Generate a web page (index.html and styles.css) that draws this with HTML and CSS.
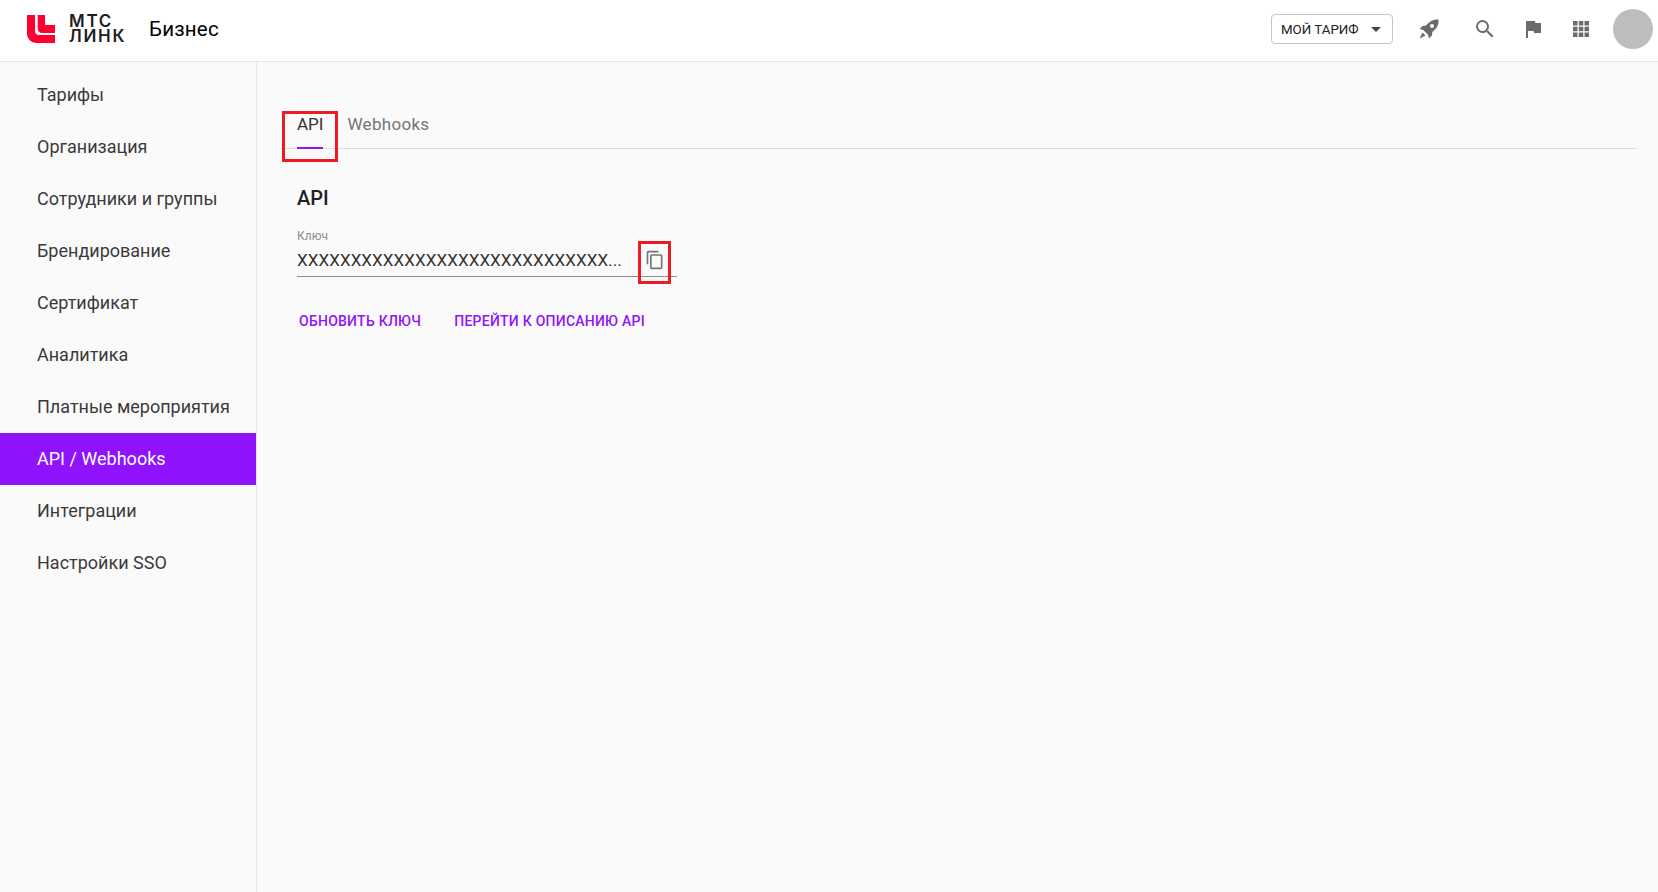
FILE: index.html
```html
<!DOCTYPE html>
<html lang="ru">
<head>
<meta charset="utf-8">
<title>API / Webhooks</title>
<link rel="stylesheet" href="styles.css">
</head>
<body>
<header class="topbar">
  <div class="brand">
    <svg class="logo" viewBox="0 0 28 28" width="28" height="28"><path fill="#ff0032" d="M0 0h8v16a4 4 0 0 0 4 4h16v8H9a9 9 0 0 1-9-9zM10.700 0H18v10h10v8H15a4.300 4.300 0 0 1-4.300-4.300z"/></svg>
    <div class="wordmark"><span>МТС</span><span>ЛИНК</span></div>
    <div class="product">Бизнес</div>
  </div>
  <div class="actions">
    <button class="plan">МОЙ ТАРИФ<span class="caret"></span></button>
    <svg class="icon rocket" viewBox="0 0 24 24" width="24" height="24"><path fill="#6b6b6b" d="M21.500 2.500c-4.200-.4-7.600.9-10.300 3.800L9 8.600l-3.600.5L2.600 12l3.700 1 4.700 4.700 1 3.700 2.900-2.800.5-3.600 2.300-2.200c2.900-2.700 4.200-6.100 3.800-10.300zM15 11a2 2 0 1 1 0-4 2 2 0 0 1 0 4zM5.500 15.500l-3 6 6-3z"/></svg>
    <svg class="icon search" viewBox="0 0 24 24" width="24" height="24"><path fill="#6b6b6b" d="M15.500 14h-.79l-.28-.27A6.471 6.471 0 0 0 16 9.500 6.500 6.500 0 1 0 9.500 16c1.610 0 3.090-.59 4.230-1.570l.27.28v.79l5 4.990L20.490 19l-4.990-5zm-6 0C7.010 14 5 11.990 5 9.500S7.010 5 9.500 5 14 7.010 14 9.500 11.990 14 9.500 14z"/></svg>
    <svg class="icon flag" viewBox="0 0 24 24" width="24" height="24"><path fill="#6b6b6b" d="M14.400 6L14 4H5v17h2v-7h5.600l.4 2h7V6z"/></svg>
    <svg class="icon apps" viewBox="0 0 24 24" width="24" height="24"><path fill="#6b6b6b" d="M4 4h4.500v4.500H4zM9.800 4h4.500v4.500H9.800zM15.500 4H20v4.500h-4.500zM4 9.800h4.500v4.500H4zM9.800 9.800h4.500v4.500H9.800zM15.500 9.800H20v4.500h-4.500zM4 15.500h4.500V20H4zM9.800 15.500h4.500V20H9.800zM15.500 15.500H20V20h-4.500z"/></svg>
    <div class="avatar"></div>
  </div>
</header>
<div class="layout">
  <nav class="sidebar">
    <a class="nav-item">Тарифы</a>
    <a class="nav-item">Организация</a>
    <a class="nav-item">Сотрудники и группы</a>
    <a class="nav-item">Брендирование</a>
    <a class="nav-item">Сертификат</a>
    <a class="nav-item">Аналитика</a>
    <a class="nav-item">Платные мероприятия</a>
    <a class="nav-item active">API / Webhooks</a>
    <a class="nav-item">Интеграции</a>
    <a class="nav-item">Настройки SSO</a>
  </nav>
  <main class="content">
    <div class="tabs">
      <div class="tab selected">API<span class="mark"></span></div>
      <div class="tab">Webhooks</div>
    </div>
    <section class="panel">
      <h2 class="title">API</h2>
      <div class="field">
        <div class="label">Ключ</div>
        <div class="value-row">
          <div class="value">XXXXXXXXXXXXXXXXXXXXXXXXXXXXX...</div>
          <svg class="copy" viewBox="0 0 24 24" width="20" height="20"><path fill="#757575" d="M16 1H4a2 2 0 0 0-2 2v14h2V3h12V1zm3 4H8a2 2 0 0 0-2 2v14a2 2 0 0 0 2 2h11a2 2 0 0 0 2-2V7a2 2 0 0 0-2-2zm0 16H8V7h11v14z"/></svg>
          <span class="callout callout-copy"></span>
        </div>
      </div>
      <div class="links">
        <a class="link">ОБНОВИТЬ КЛЮЧ</a>
        <a class="link">ПЕРЕЙТИ К ОПИСАНИЮ API</a>
      </div>
    </section>
    <span class="callout callout-tab"></span>
  </main>
</div>
</body>
</html>
```
FILE: styles.css
```css
* { box-sizing: border-box; }
html, body { height: 100%; }
body {
  margin: 0;
  background: #fafafa;
  font-family: Roboto, "Liberation Sans", sans-serif;
  color: #212121;
  overflow: hidden;
}
.topbar {
  height: 62px;
  background: #fff;
  border-bottom: 1px solid #e6e6e6;
  display: flex;
  align-items: center;
  justify-content: space-between;
  padding: 0 5px 3px 27px;
}
.brand { display: flex; align-items: center; }
.logo { display: block; }
.wordmark {
  display: flex;
  flex-direction: column;
  margin-left: 14px;
  font-family: Inter, Roboto, sans-serif;
  font-weight: 600;
  font-size: 17px;
  letter-spacing: 1.700px;
  line-height: 15.500px;
  color: #1d2023;
}
.product { margin-left: 23px; font-size: 20.500px; font-weight: 400; color: #000; letter-spacing: .2px; }
.actions { display: flex; align-items: center; }
.plan {
  width: 122px;
  height: 30px;
  background: #fff;
  border: 1px solid #c4c4c4;
  border-radius: 4px;
  font-family: Roboto, sans-serif;
  font-size: 13.300px;
  color: #212121;
  display: flex;
  align-items: center;
  padding: 0 10px 0 9px;
  justify-content: space-between;
}
.caret {
  width: 0; height: 0;
  border-left: 5px solid transparent;
  border-right: 5px solid transparent;
  border-top: 5px solid #444;
  margin-right: 1px;
}
.icon { display: block; }
.rocket { margin-left: 24px; }
.search { margin-left: 32px; }
.flag { margin-left: 24px; }
.apps { margin-left: 24px; }
.avatar { width: 40px; height: 40px; border-radius: 50%; background: #bdbdbd; margin-left: 20px; }
.layout { display: flex; height: calc(100% - 62px); }
.sidebar {
  width: 257px;
  flex: none;
  border-right: 1px solid #e6e6e6;
  padding-top: 7px;
}
.nav-item {
  display: flex;
  align-items: center;
  height: 52px;
  padding: 0 0 2px 37px;
  font-size: 18px;
  color: #3a3a3a;
}
.nav-item.active { background: #9013fe; color: #fff; }
.content { flex: 1; padding: 42px 21px 0 24px; position: relative; }
.tabs {
  display: flex;
  height: 45px;
  border-bottom: 1px solid #dcdcdc;
  padding-left: 16px;
  gap: 24px;
  font-size: 17px;
  letter-spacing: .3px;
}
.tab { color: #757575; position: relative; padding-top: 10px; }
.tab.selected { color: #333; letter-spacing: 0; }
.mark { position: absolute; left: 0; right: 0; bottom: -1px; height: 2px; background: #9013fe; }
.panel { padding: 37px 0 0 16px; }
.title { margin: 0; font-size: 20px; font-weight: 500; line-height: 24px; color: #212121; }
.field { width: 380px; margin-top: 19px; }
.label { font-size: 12px; line-height: 15px; color: #8b8b8b; }
.value-row {
  display: flex;
  align-items: center;
  position: relative;
  height: 33px;
  margin-bottom: 1px;
  border-bottom: 1px solid #8c8c8c;
}
.value { flex: none; font-size: 17px; letter-spacing: .07px; color: #333; width: 332px; white-space: nowrap; overflow: hidden; }
.copy { flex: none; margin-left: 16px; display: block; }
.links { display: flex; gap: 33px; padding: 35px 0 0 2px; }
.link { font-size: 14px; font-weight: 500; letter-spacing: .25px; color: #9013fe; }
.callout { position: absolute; border: 3px solid #ed1c24; }
.callout-tab { left: 25px; top: 49px; width: 56px; height: 51px; }
.callout-copy { left: 341px; top: -3px; width: 33px; height: 43px; }
```
